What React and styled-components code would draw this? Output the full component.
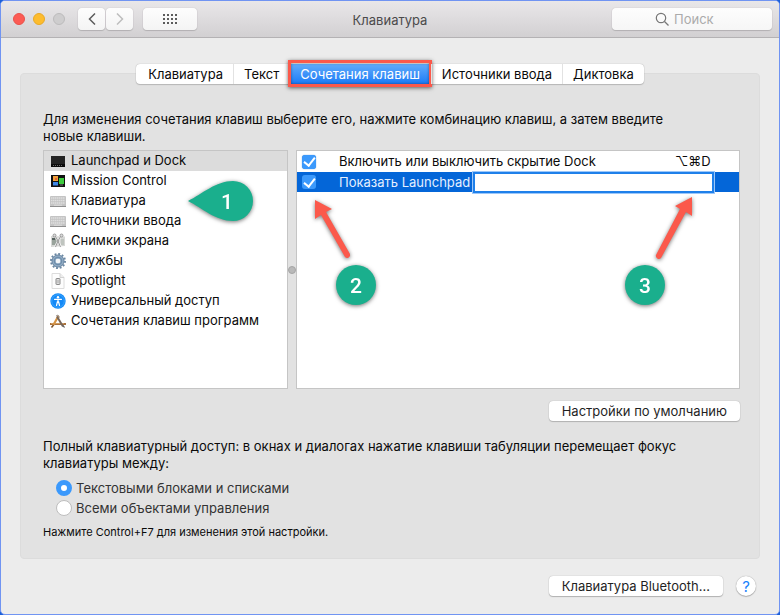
import React, { useState } from 'react';
import styled, { createGlobalStyle, css } from 'styled-components';

const GlobalStyle = createGlobalStyle`
  * {
    box-sizing: border-box;
  }

  body {
    margin: 0;
    background: #1a5fd8;
    color: #0a0a0a;
    font-family: Inter, "Noto Sans", sans-serif;
    font-size: 13px;
    line-height: 17px;
  }

  button,
  input {
    margin: 0;
    font: inherit;
    color: inherit;
  }
`;

const Window = styled.div`
  display: flex;
  flex-direction: column;
  min-height: 100vh;
  border: 1px solid #7094f2;
  border-radius: 5px;
  background: #ececec;
  overflow: hidden;
`;

const Toolbar = styled.header`
  display: grid;
  grid-template-columns: 1fr auto 1fr;
  align-items: center;
  height: 37px;
  padding: 0 7px;
  border-bottom: 1px solid #b4b2b4;
  background: linear-gradient(#e9e7e9, #d2d0d2);
`;

const ToolbarLeft = styled.div`
  display: flex;
  align-items: center;
  padding-left: 5px;
`;

const Lights = styled.div`
  display: flex;
  gap: 8px;
  margin-right: 12px;
`;

const Light = styled.button`
  width: 12px;
  height: 12px;
  padding: 0;
  border: 1px solid ${({ $border }) => $border};
  border-radius: 50%;
  background: ${({ $color }) => $color};
`;

const ToolButton = styled.button`
  display: flex;
  align-items: center;
  justify-content: center;
  width: ${({ $wide }) => ($wide ? 54 : 27)}px;
  height: 22px;
  margin-left: ${({ $wide }) => ($wide ? 10 : 1)}px;
  padding: 0;
  border: 0;
  border-radius: 4px;
  background: linear-gradient(#fdfdfd, #f4f4f4);
  box-shadow: 0 0 1px #a9a7a9, 0 1px 1px #b3b1b3;
  color: ${({ disabled }) => (disabled ? '#bdbdbd' : '#5c5c5c')};
`;

const Title = styled.h1`
  margin: 0;
  padding-top: 3px;
  color: #4b4a4b;
  font-size: 13px;
  font-weight: 400;
`;

const Search = styled.label`
  display: flex;
  align-items: center;
  justify-self: end;
  gap: 5px;
  width: 160px;
  height: 22px;
  padding-left: 43px;
  border-radius: 4px;
  background: linear-gradient(#fdfdfd, #f6f6f6);
  box-shadow: 0 0 1px #a9a7a9, 0 1px 1px #b3b1b3;
`;

const SearchInput = styled.input`
  flex: 1;
  min-width: 0;
  padding: 0;
  border: 0;
  outline: 0;
  background: none;

  &::placeholder {
    color: #ababab;
  }
`;

const Content = styled.main`
  flex: 1;
  padding: 26px 19px 0;
`;

const Tabs = styled.nav`
  position: relative;
  z-index: 1;
  display: flex;
  width: fit-content;
  height: 20px;
  margin: 0 auto;
  border-radius: 4px;
  background: #fff;
  box-shadow: 0 0 1px #999, 0 1px 1px #bbb;
`;

const Tab = styled.button`
  position: relative;
  padding: 0 10px;
  border: 0;
  border-left: 1px solid #e2e2e2;
  background: none;
  white-space: nowrap;

  &:first-child {
    border-left: 0;
    padding-left: 12px;
  }

  ${({ $active }) =>
    $active &&
    css`
      border-left: 0;
      padding: 0 11px;
      background: linear-gradient(#62abf9, #1a7bf8);
      color: #fff;
    `}
`;

const Highlight = styled.span`
  position: absolute;
  inset: -4px -1px -3px;
  border: 3px solid #fb594b;
  box-shadow: 0 1px 4px rgba(0, 0, 0, 0.6), inset 0 0 3px rgba(0, 0, 0, 0.4);
  pointer-events: none;
`;

const Panel = styled.section`
  margin-top: -11px;
  padding: 37px 19px 17px 22px;
  border: 1px solid #dcdcdc;
  border-radius: 4px;
  background: #e2e2e2;
`;

const Text = styled.p`
  max-width: 640px;
  margin: 0;
`;

const Panes = styled.div`
  display: grid;
  grid-template-columns: 245px 8px 1fr;
  height: 239px;
  margin: 5px 0 12px;
`;

const Pane = styled.div`
  position: relative;
  border: 1px solid #c5c5c5;
  background: #fff;
`;

const Splitter = styled.div`
  display: flex;
  align-items: center;
  justify-content: center;

  &::before {
    content: '';
    width: 6px;
    height: 6px;
    border: 1px solid #a5a5a5;
    border-radius: 50%;
    background: #b9b9b9;
  }
`;

const CategoryList = styled.ul`
  margin: 0;
  padding: 0;
  list-style: none;
`;

const Category = styled.button`
  display: flex;
  align-items: center;
  gap: 5px;
  width: 100%;
  height: 20px;
  padding: 0 6px 1px;
  border: 0;
  background: ${({ $selected }) => ($selected ? '#dcdcdc' : 'none')};
  text-align: left;
`;

const ShortcutTable = styled.table`
  width: 100%;
  border-collapse: collapse;
  table-layout: fixed;
`;

const ShortcutRow = styled.tr`
  height: ${({ $selected }) => ($selected ? 20 : 21)}px;
  background: ${({ $selected }) => ($selected ? '#0466d8' : '#fff')};
  color: ${({ $selected }) => ($selected ? '#e4efff' : '#0a0a0a')};
`;

const Cell = styled.td`
  width: ${({ $width }) => $width || 'auto'};
  padding: 0;
  padding-left: ${({ $inset }) => ($inset ? 5 : 0)}px;
  vertical-align: middle;
  white-space: nowrap;
`;

const EditCell = styled.div`
  display: flex;
  align-items: center;
  gap: 5px;
  padding-right: 27px;
`;

const KeyInput = styled.input`
  flex: 1;
  min-width: 0;
  height: 17px;
  padding: 0 4px;
  border: 0;
  outline: 0;
  background: #fff;
  box-shadow: 0 0 0 2px #1f80ea, 0 0 0 3px #9cc7f9;
  color: #0a0a0a;
`;

const Checkbox = styled.input`
  display: grid;
  place-content: center;
  width: 14px;
  height: 14px;
  appearance: none;
  border-radius: 3px;
  background: ${({ checked }) => (checked ? '#3b99fc' : '#fff')};
  box-shadow: 0 0 1px #2373c8;

  &:checked::before {
    content: '';
    width: 5px;
    height: 9px;
    margin-bottom: 2px;
    border: solid #fff;
    border-width: 0 2px 2px 0;
    transform: rotate(38deg);
  }
`;

const PushButton = styled.button`
  height: 20px;
  padding: 0 13px;
  border: 0;
  border-radius: 4px;
  background: #fff;
  box-shadow: 0 0 1px #999, 0 1px 1px #b5b5b5;
  color: #1f1f1f;
`;

const PaneActions = styled.div`
  display: flex;
  justify-content: flex-end;
  margin-bottom: 17px;
`;

const RadioGroup = styled.div`
  display: flex;
  flex-direction: column;
  margin: 6px 0;
  padding-left: 13px;
`;

const RadioLabel = styled.label`
  display: flex;
  align-items: center;
  gap: 4px;
  height: 20px;
  color: #333;
`;

const Radio = styled.input`
  width: 16px;
  height: 16px;
  appearance: none;
  border: 1px solid #bdbdbd;
  border-radius: 50%;
  background: #fff;

  &:checked {
    border: 5px solid #3b99fc;
  }
`;

const Note = styled.p`
  margin: 0;
  font-size: 11px;
`;

const Footer = styled.footer`
  display: flex;
  align-items: center;
  justify-content: flex-end;
  gap: 13px;
  padding: 17px 23px 18px;
`;

const HelpButton = styled.button`
  width: 20px;
  height: 20px;
  padding: 0;
  border: 0;
  border-radius: 50%;
  background: #fff;
  box-shadow: 0 0 1px #888, 0 1px 1px #b5b5b5;
  color: #1a82fb;
  font-size: 15px;
`;

const Callout = styled.svg`
  position: absolute;
  top: ${({ $top }) => $top}px;
  left: ${({ $left }) => ($left === undefined ? 'auto' : `${$left}px`)};
  right: ${({ $right }) => ($right === undefined ? 'auto' : `${$right}px`)};
  overflow: visible;
  pointer-events: none;
  filter: drop-shadow(0 1px 2px rgba(0, 0, 0, 0.55));
`;

const CalloutNumber = styled.text`
  fill: #fff;
  font-family: Roboto, sans-serif;
  font-size: 21px;
  font-weight: 500;
  text-anchor: middle;
`;

const DockIcon = () => (
  <svg width="16" height="16" viewBox="0 0 16 16">
    <rect x="1" y="3" width="14" height="11" fill="#242424" />
    <path d="M1 11h14v3H1z" fill="#0c0c0c" />
    <path d="M3 12.5h10" stroke="#6b6b6b" strokeDasharray="1 1" />
  </svg>
);

const MissionIcon = () => (
  <svg width="16" height="16" viewBox="0 0 16 16">
    <rect x="1" y="2" width="14" height="12" fill="#111" />
    <rect x="3" y="3" width="5" height="5" fill="#f1a13b" />
    <rect x="9" y="5" width="5" height="6" fill="#3dcb3e" />
    <path d="M3 9h5v3.500H3z" fill="#3e86e5" />
    <path d="M5 5h2v2H5z" fill="#df6139" />
    <path d="M10 12h3" stroke="#777" />
  </svg>
);

const KeyboardIcon = () => (
  <svg width="16" height="16" viewBox="0 0 16 16">
    <rect y="3" width="16" height="11" rx="1" fill="#c4c4c4" />
    <path d="M0 13.5h16" stroke="#8f8f8f" />
    <path d="M1 5h14M1 7.500h14M1 10h14" stroke="#dedede" strokeWidth="1.700" strokeDasharray="1.500 .5" />
    <path d="M4 12.200h8" stroke="#dedede" />
  </svg>
);

const ScreenshotIcon = () => (
  <svg width="16" height="16" viewBox="0 0 16 16">
    <path d="M1 3l14 .5V13L1 14z" fill="#d6d7d5" />
    <path d="M2 5h4l1 3-1 4H2z" fill="#99a39c" />
    <path d="M2 5h3v2H2z" fill="#56625f" />
    <path d="M11 6h3v6h-3z" fill="#bfc4bf" />
    <path d="M5.500 3.500L8 8l3 6M10.500 3.500L8 8l-3 6" fill="none" stroke="#f3f3f3" strokeWidth="2" />
    <path d="M5.500 3.500L8 8l2.500 6M10.500 3.500L8 8l-2.500 6" fill="none" stroke="#808080" strokeWidth=".8" />
    <circle cx="4.500" cy="2.500" r="1.500" fill="#ddd" stroke="#888" strokeWidth=".8" />
    <circle cx="11.500" cy="2.500" r="1.500" fill="#ddd" stroke="#888" strokeWidth=".8" />
  </svg>
);

const GearIcon = () => (
  <svg width="16" height="16" viewBox="0 0 16 16">
    <circle cx="8" cy="8" r="7" fill="none" stroke="#6b87a2" strokeWidth="2" strokeDasharray="1.900 1.765" />
    <circle cx="8" cy="8" r="4.300" fill="none" stroke="#8fabc4" strokeWidth="4" />
    <circle cx="8" cy="8" r="6" fill="none" stroke="#67829d" strokeWidth=".8" />
    <circle cx="8" cy="8" r="3.800" fill="none" stroke="#5f7f9e" strokeWidth=".8" />
    <circle cx="8" cy="8" r="2" fill="#f2f5f8" />
  </svg>
);

const DocumentIcon = () => (
  <svg width="16" height="16" viewBox="0 0 16 16">
    <path d="M2 .5h8l4 4v11H2z" fill="#fdfdfd" stroke="#dcdcdc" />
    <path d="M10 .5v4h4" fill="#eee" stroke="#d2d2d2" />
    <rect x="6" y="5.500" width="4" height="6" rx=".5" fill="#ddd" stroke="#8a8a8a" />
    <path d="M8 7v3" stroke="#aaa" />
  </svg>
);

const AccessIcon = () => (
  <svg width="16" height="16" viewBox="0 0 16 16">
    <circle cx="8" cy="8" r="7.700" fill="#1389f7" />
    <circle cx="8" cy="8" r="6.300" fill="none" stroke="#4db0fd" strokeWidth=".7" />
    <circle cx="8" cy="4.200" r="1.200" fill="#fff" />
    <path d="M4.500 6.300h7M8 6.300v3M7.500 8.500L6.500 12.500M8.500 8.500l1 4" stroke="#fff" strokeWidth="1.200" strokeLinecap="round" />
  </svg>
);

const AppsIcon = () => (
  <svg width="16" height="16" viewBox="0 0 16 16">
    <path d="M0 11h16" stroke="#a9713c" strokeWidth="2" />
    <path d="M1 10.500h13" stroke="#dfb277" strokeWidth=".7" />
    <path d="M8.500 3L3 12.500" stroke="#d59444" strokeWidth="2.200" />
    <path d="M3.500 12l-2 2.500" stroke="#7a5431" strokeWidth="1.500" />
    <path d="M7 3.500l6 10" stroke="#77675c" strokeWidth="2" />
    <path d="M6 3l2-1 1.500 2.500" fill="none" stroke="#9a8f86" />
    <path d="M13 12.500l1.500 2" stroke="#555" strokeWidth="1.200" />
  </svg>
);

const TABS = ['Клавиатура', 'Текст', 'Сочетания клавиш', 'Источники ввода', 'Диктовка'];

const CATEGORIES = [
  { name: 'Launchpad и Dock', Icon: DockIcon },
  { name: 'Mission Control', Icon: MissionIcon },
  { name: 'Клавиатура', Icon: KeyboardIcon },
  { name: 'Источники ввода', Icon: KeyboardIcon },
  { name: 'Снимки экрана', Icon: ScreenshotIcon },
  { name: 'Службы', Icon: GearIcon },
  { name: 'Spotlight', Icon: DocumentIcon },
  { name: 'Универсальный доступ', Icon: AccessIcon },
  { name: 'Сочетания клавиш программ', Icon: AppsIcon },
];

const ACCESS_OPTIONS = ['Текстовыми блоками и списками', 'Всеми объектами управления'];

function WindowToolbar() {
  return (
    <Toolbar>
      <ToolbarLeft>
        <Lights>
          <Light aria-label="Закрыть" $color="#fc5b54" $border="#e9514a" />
          <Light aria-label="Свернуть" $color="#fdbc2e" $border="#e8a926" />
          <Light aria-label="Развернуть" $color="#cecdce" $border="#bcbbbc" disabled />
        </Lights>
        <ToolButton aria-label="Назад">
          <svg width="8" height="12" fill="none" stroke="currentColor" strokeWidth="1.500">
            <path d="M7 .5L1.500 6 7 11.500" />
          </svg>
        </ToolButton>
        <ToolButton aria-label="Вперед" disabled>
          <svg width="8" height="12" fill="none" stroke="currentColor" strokeWidth="1.500">
            <path d="M1 .5L6.500 6 1 11.500" />
          </svg>
        </ToolButton>
        <ToolButton aria-label="Показать все" $wide>
          <svg width="14" height="10" stroke="currentColor" strokeWidth="2" strokeDasharray="2 2">
            <path d="M0 1h14M0 5h14M0 9h14" />
          </svg>
        </ToolButton>
      </ToolbarLeft>
      <Title>Клавиатура</Title>
      <Search>
        <svg width="14" height="14" fill="none" stroke="#777" strokeWidth="1.200">
          <circle cx="6" cy="6" r="4.700" />
          <path d="M9.500 9.500l4 4" />
        </svg>
        <SearchInput type="text" placeholder="Поиск" aria-label="Поиск" />
      </Search>
    </Toolbar>
  );
}

export default function App() {
  const [tab, setTab] = useState(2);
  const [category, setCategory] = useState(0);
  const [enabled, setEnabled] = useState([true, true]);
  const [access, setAccess] = useState(0);

  const toggle = (index) => {
    setEnabled(enabled.map((value, i) => (i === index ? !value : value)));
  };

  return (
    <Window>
      <GlobalStyle />
      <WindowToolbar />
      <Content>
        <Tabs>
          {TABS.map((name, i) => (
            <Tab key={name} $active={i === tab} onClick={() => setTab(i)}>
              {name}
              {i === 2 && <Highlight />}
            </Tab>
          ))}
        </Tabs>
        <Panel>
          <Text>
            Для изменения сочетания клавиш выберите его, нажмите комбинацию клавиш, а затем введите
            новые клавиши.
          </Text>
          <Panes>
            <Pane>
              <CategoryList>
                {CATEGORIES.map(({ name, Icon }, i) => (
                  <li key={name}>
                    <Category $selected={i === category} onClick={() => setCategory(i)}>
                      <Icon />
                      {name}
                    </Category>
                  </li>
                ))}
              </CategoryList>
              <Callout $top={30} $left={144} width="66" height="40">
                <path d="M0 20C14 13 28 0 45 0a20 20 0 0 1 0 40C28 40 14 27 0 20z" fill="#1aaf8d" />
                <CalloutNumber x="39" y="28">1</CalloutNumber>
              </Callout>
            </Pane>
            <Splitter />
            <Pane>
              <ShortcutTable>
                <tbody>
                  <ShortcutRow>
                    <Cell $width="42px" $inset>
                      <Checkbox
                        type="checkbox"
                        id="dock-hiding"
                        checked={enabled[0]}
                        onChange={() => toggle(0)}
                      />
                    </Cell>
                    <Cell>
                      <label htmlFor="dock-hiding">Включить или выключить скрытие Dock</label>
                    </Cell>
                    <Cell $width="64px">⌥⌘D</Cell>
                  </ShortcutRow>
                  <ShortcutRow $selected>
                    <Cell $inset>
                      <Checkbox
                        type="checkbox"
                        id="launchpad"
                        checked={enabled[1]}
                        onChange={() => toggle(1)}
                      />
                    </Cell>
                    <Cell colSpan={2}>
                      <EditCell>
                        <label htmlFor="launchpad">Показать Launchpad</label>
                        <KeyInput type="text" aria-label="Новое сочетание клавиш" />
                      </EditCell>
                    </Cell>
                  </ShortcutRow>
                </tbody>
              </ShortcutTable>
              <Callout $top={49} $left={18} width="62" height="106">
                <path d="M0 0l17 9-6 3 24 42a3 3 0 0 1-5 3L6 15l-6 4z" fill="#fb594b" />
                <circle cx="41" cy="85" r="20" fill="#1aaf8d" />
                <CalloutNumber x="41" y="93">2</CalloutNumber>
              </Callout>
              <Callout $top={46} $right={47} width="67" height="109">
                <path d="M67 0v19l-6-4-25 46a3 3 0 0 1-5-3l24-46-5-3z" fill="#fb594b" />
                <circle cx="20" cy="88" r="20" fill="#1aaf8d" />
                <CalloutNumber x="20" y="96">3</CalloutNumber>
              </Callout>
            </Pane>
          </Panes>
          <PaneActions>
            <PushButton>Настройки по умолчанию</PushButton>
          </PaneActions>
          <Text>
            Полный клавиатурный доступ: в окнах и диалогах нажатие клавиши табуляции перемещает фокус
            клавиатуры между:
          </Text>
          <RadioGroup role="radiogroup">
            {ACCESS_OPTIONS.map((option, i) => (
              <RadioLabel key={option}>
                <Radio
                  type="radio"
                  name="access"
                  checked={i === access}
                  onChange={() => setAccess(i)}
                />
                {option}
              </RadioLabel>
            ))}
          </RadioGroup>
          <Note>Нажмите Control+F7 для изменения этой настройки.</Note>
        </Panel>
      </Content>
      <Footer>
        <PushButton>Клавиатура Bluetooth…</PushButton>
        <HelpButton aria-label="Справка">?</HelpButton>
      </Footer>
    </Window>
  );
}
